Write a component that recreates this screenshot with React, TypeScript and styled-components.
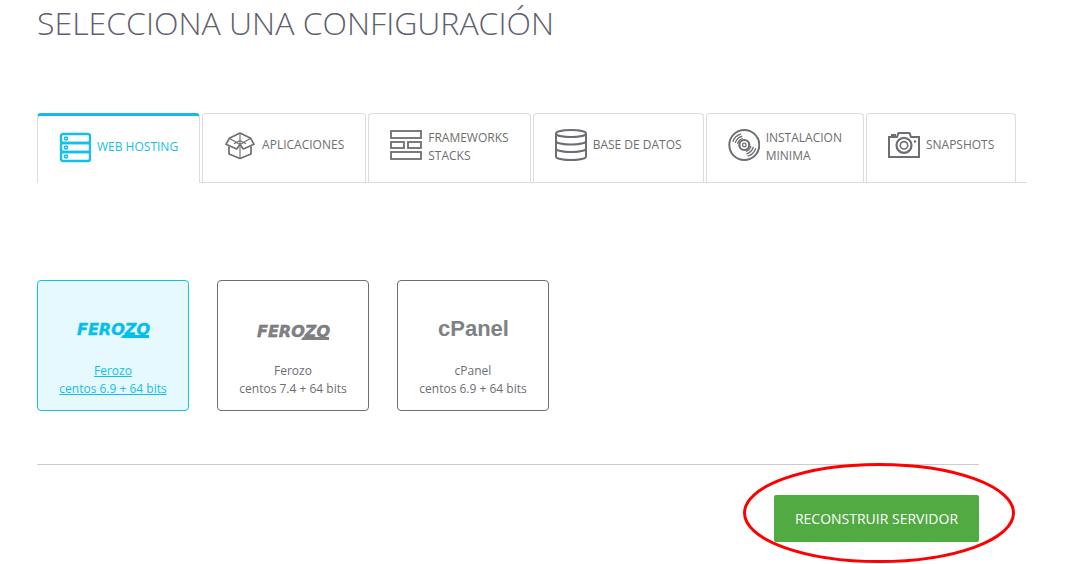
import React, { useState } from 'react';
import styled, { createGlobalStyle, css } from 'styled-components';

const GlobalStyle = createGlobalStyle`
  *, *::before, *::after { box-sizing: border-box; }
  body {
    margin: 0;
    background: #fff;
    color: #6d6e71;
    font: 400 12px/18px "Open Sans", sans-serif;
  }
`;

const Page = styled.main`
  padding: 0 40px 0 37px;
  overflow: hidden;
`;

const Title = styled.h1`
  margin: 0 0 67px;
  color: #5f6070;
  font-size: 32px;
  font-weight: 300;
  line-height: 46px;
`;

const TabList = styled.div`
  display: flex;
  gap: 2px;
  border-bottom: 1px solid #ddd;
`;

const Tab = styled.button<{ $active: boolean }>`
  display: flex;
  align-items: flex-start;
  gap: 6px;
  height: 69px;
  padding: 15px 21px 0;
  border: 1px solid #ddd;
  border-bottom: 0;
  border-radius: 4px 4px 0 0;
  background: #fff;
  color: #6d6e71;
  font: inherit;
  text-align: left;
  white-space: nowrap;
  cursor: pointer;
  ${({ $active }) =>
    $active &&
    css`
      height: 70px;
      margin-bottom: -1px;
      border-top: 3px solid #14bae6;
      color: #14bfea;
    `}
`;

const TabIcon = styled.svg`
  flex: none;
  width: 32px;
  height: 32px;
  fill: none;
  stroke: currentColor;
`;

const TabLabel = styled.span`
  display: flex;
  flex-direction: column;
  justify-content: center;
  min-height: 32px;
`;

const Options = styled.div`
  display: flex;
  flex-wrap: wrap;
  gap: 28px;
  padding: 97px 0 53px;
`;

const Option = styled.a<{ $selected: boolean }>`
  display: flex;
  flex-direction: column;
  align-items: center;
  gap: 9px;
  width: 152px;
  padding: 32px 0 12px;
  border: 1px solid #6d6e71;
  border-radius: 4px;
  color: #6d6e71;
  text-align: center;
  text-decoration: none;
  ${({ $selected }) =>
    $selected &&
    css`
      border-color: #14bfea;
      background: #e6f9fe;
      color: #14bfea;
      text-decoration: underline;
    `}
`;

const Logo = styled.svg<{ $selected: boolean }>`
  width: 80px;
  height: 40px;
  fill: ${({ $selected }) => ($selected ? '#00bff0' : '#808184')};
`;

const FerozoText = styled.text`
  font: italic 700 16px "DejaVu Sans", sans-serif;
`;

const CpanelText = styled.text`
  font: 700 22px "Liberation Sans", sans-serif;
`;

const Footer = styled.footer`
  display: flex;
  justify-content: flex-end;
  margin-right: 48px;
  padding: 30px 0 22px;
  border-top: 1px solid #ccc;
`;

const Highlight = styled.div`
  position: relative;
`;

const Ring = styled.svg`
  position: absolute;
  top: -32px;
  left: -31px;
  width: 272px;
  height: 100px;
  fill: none;
  stroke: #f00;
  stroke-width: 3;
  pointer-events: none;
`;

const SubmitButton = styled.button`
  display: block;
  width: 205px;
  height: 47px;
  border: 0;
  border-radius: 2px;
  background: #52aa42;
  color: #fff;
  font: 400 14px/20px "Open Sans", sans-serif;
  cursor: pointer;
`;

const ServerIcon = () => (
  <TabIcon viewBox="0 0 32 32" aria-hidden="true" strokeWidth="2.4">
    {[3, 12, 21].map((y) => (
      <g key={y}>
        <rect x="2" y={y} width="29" height="9" rx="2" />
        <circle cx="7" cy={y + 4.5} r="1.5" strokeWidth="1.6" />
      </g>
    ))}
  </TabIcon>
);

const BoxIcon = () => (
  <TabIcon viewBox="0 0 32 32" aria-hidden="true" strokeWidth="1.7" strokeLinejoin="round">
    <path d="M16 4 5.3 9.3 2 15.300l10.700 4.700L16 15.500l3.300 4.500L30 15.300 26.700 9.300Z" />
    <path d="M5 17.500v7.500l11 4.500 11-4.500v-7.500" />
    <path d="M5.300 9.300 16 15.500l10.700-6.200M16 4v25.500M10 14.800l6-3.300 6 3.300" strokeWidth="1.1" />
  </TabIcon>
);

const BlocksIcon = () => (
  <TabIcon viewBox="0 0 32 32" aria-hidden="true" strokeWidth="1.8">
    <rect x="1" y="2" width="30" height="7" />
    <rect x="1" y="13" width="13" height="6" />
    <rect x="18" y="13" width="13" height="6" />
    <rect x="1" y="23" width="30" height="7" />
  </TabIcon>
);

const DatabaseIcon = () => (
  <TabIcon viewBox="0 0 32 32" aria-hidden="true" strokeWidth="2">
    <ellipse cx="16" cy="4.500" rx="15" ry="3.500" />
    <path d="M1 4.500v23c0 4.600 30 4.600 30 0v-23M1 12c0 4.600 30 4.600 30 0M1 19.500c0 4.600 30 4.600 30 0" />
  </TabIcon>
);

const DiscIcon = () => (
  <TabIcon viewBox="0 0 32 32" aria-hidden="true" strokeWidth="2">
    <circle cx="16.300" cy="16" r="15" />
    <circle cx="16.300" cy="16" r="5" strokeWidth="2.200" />
    <circle cx="16.300" cy="16" r="1.800" strokeWidth="1.300" />
    <g strokeWidth="1.300">
      <path d="M4.800 12.800C6 9 9 6 13 4.800M7.200 14C8.300 10.500 10.800 8.200 14.200 7.200M9.600 14.800C10.300 12.200 12.200 10.200 14.800 9.600" />
      <path d="M27.800 19.200C26.600 23 23.600 26 19.600 27.200M25.400 18C24.300 21.500 21.800 23.800 18.400 24.800M23 17.200C22.300 19.800 20.400 21.800 17.800 22.400" />
    </g>
  </TabIcon>
);

const CameraIcon = () => (
  <TabIcon viewBox="0 0 32 32" aria-hidden="true" strokeWidth="2">
    <path d="M1 8h8l1.500-4h11L23 8h8v20H1Z" />
    <path d="M3 6h5" />
    <circle cx="16" cy="16.300" r="7.500" strokeWidth="2.200" />
    <circle cx="16" cy="16.300" r="3.700" strokeWidth="1.600" />
    <circle cx="27" cy="12.500" r="1.200" fill="currentColor" stroke="none" />
  </TabIcon>
);

const FerozoLogo = ({ selected, y }: { selected: boolean; y: number }) => (
  <Logo $selected={selected} viewBox="0 0 80 40" role="img" aria-label="Ferozo">
    <FerozoText x="4" y={y} stroke="currentColor" strokeWidth="0.4">FEROZO</FerozoText>
    <path d={`M50 ${y}h26v3H48Z`} />
  </Logo>
);

const CpanelLogo = ({ selected }: { selected: boolean }) => (
  <Logo $selected={selected} viewBox="0 0 80 40" role="img" aria-label="cPanel">
    <CpanelText x="5" y="23">cPanel</CpanelText>
  </Logo>
);

const tabs = [
  { lines: ['WEB HOSTING'], Icon: ServerIcon },
  { lines: ['APLICACIONES'], Icon: BoxIcon },
  { lines: ['FRAMEWORKS', 'STACKS'], Icon: BlocksIcon },
  { lines: ['BASE DE DATOS'], Icon: DatabaseIcon },
  { lines: ['INSTALACION', 'MINIMA'], Icon: DiscIcon },
  { lines: ['SNAPSHOTS'], Icon: CameraIcon },
];

const options = [
  { brand: 'Ferozo', system: 'centos 6.9 + 64 bits', logoY: 22 },
  { brand: 'Ferozo', system: 'centos 7.4 + 64 bits', logoY: 24 },
  { brand: 'cPanel', system: 'centos 6.9 + 64 bits', logoY: 0 },
];

export default function App() {
  const [tab, setTab] = useState(0);
  const [option, setOption] = useState(0);

  return (
    <>
      <GlobalStyle />
      <Page>
        <Title>SELECCIONA UNA CONFIGURACIÓN</Title>
        <TabList role="tablist">
          {tabs.map(({ lines, Icon }, i) => (
            <Tab
              key={lines[0]}
              type="button"
              role="tab"
              aria-selected={tab === i}
              $active={tab === i}
              onClick={() => setTab(i)}
            >
              <Icon />
              <TabLabel>
                {lines.map((line) => (
                  <span key={line}>{line}</span>
                ))}
              </TabLabel>
            </Tab>
          ))}
        </TabList>
        <Options>
          {options.map(({ brand, system, logoY }, i) => (
            <Option
              key={brand + system}
              href="#"
              $selected={option === i}
              onClick={(event) => {
                event.preventDefault();
                setOption(i);
              }}
            >
              {brand === 'Ferozo' ? (
                <FerozoLogo selected={option === i} y={logoY} />
              ) : (
                <CpanelLogo selected={option === i} />
              )}
              <span>
                {brand}
                <br />
                {system}
              </span>
            </Option>
          ))}
        </Options>
        <Footer>
          <Highlight>
            <SubmitButton type="button">RECONSTRUIR SERVIDOR</SubmitButton>
            <Ring viewBox="0 0 272 100" aria-hidden="true">
              <ellipse cx="136" cy="50" rx="134.500" ry="48.500" />
            </Ring>
          </Highlight>
        </Footer>
      </Page>
    </>
  );
}
